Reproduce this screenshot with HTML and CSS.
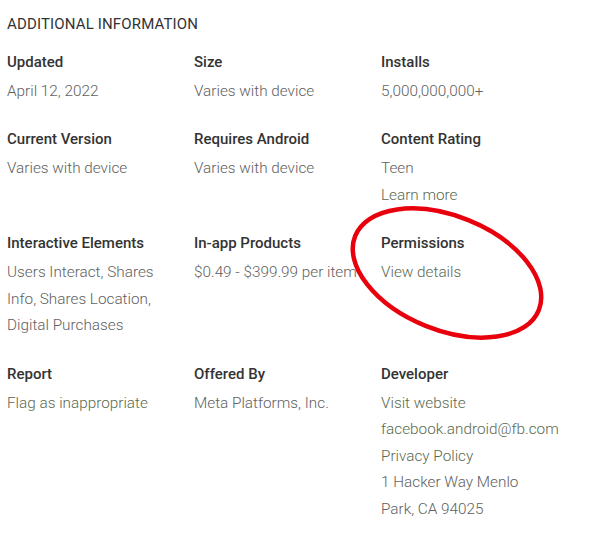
FILE: index.html
```html
<!DOCTYPE html>
<html>
<head>
<meta charset="utf-8">
<link rel="stylesheet" href="styles.css">
</head>
<body>
<div class="page">
  <h2 class="title">ADDITIONAL INFORMATION</h2>
  <div class="grid">
    <div class="item">
      <div class="label">Updated</div>
      <div class="values"><div>April 12, 2022</div></div>
    </div>
    <div class="item">
      <div class="label">Size</div>
      <div class="values"><div>Varies with device</div></div>
    </div>
    <div class="item">
      <div class="label">Installs</div>
      <div class="values"><div>5,000,000,000+</div></div>
    </div>

    <div class="item">
      <div class="label">Current Version</div>
      <div class="values"><div>Varies with device</div></div>
    </div>
    <div class="item">
      <div class="label">Requires Android</div>
      <div class="values"><div>Varies with device</div></div>
    </div>
    <div class="item">
      <div class="label">Content Rating</div>
      <div class="values"><div>Teen</div><div class="link">Learn more</div></div>
    </div>

    <div class="item">
      <div class="label">Interactive Elements</div>
      <div class="values"><div>Users Interact, Shares Info, Shares Location, Digital Purchases</div></div>
    </div>
    <div class="item">
      <div class="label">In-app Products</div>
      <div class="values"><div class="nowrap">$0.49 - $399.99 per item</div></div>
    </div>
    <div class="item">
      <div class="label">Permissions</div>
      <div class="values"><div class="link">View details</div></div>
    </div>

    <div class="item">
      <div class="label">Report</div>
      <div class="values"><div class="link">Flag as inappropriate</div></div>
    </div>
    <div class="item">
      <div class="label">Offered By</div>
      <div class="values"><div>Meta Platforms, Inc.</div></div>
    </div>
    <div class="item">
      <div class="label">Developer</div>
      <div class="values">
        <div class="link">Visit website</div>
        <div class="link">facebook.android@fb.com</div>
        <div class="link">Privacy Policy</div>
        <div>1 Hacker Way Menlo Park, CA 94025</div>
      </div>
    </div>
  </div>
  <svg class="circle" width="614" height="547" viewBox="0 0 614 547" aria-hidden="true">
    <ellipse cx="447" cy="273" rx="99" ry="57" transform="rotate(22 447 273)" fill="none" stroke="#e8000c" stroke-width="4.5"/>
  </svg>
</div>
</body>
</html>
```

FILE: styles.css
```css
html, body {
  margin: 0;
  padding: 0;
  background: #ffffff;
}

.page {
  position: relative;
  width: 614px;
  height: 547px;
  padding: 12px 0 0 7px;
  box-sizing: border-box;
  font-family: Roboto, "Liberation Sans", sans-serif;
  overflow: hidden;
}

.title {
  margin: 0;
  font-size: 15px;
  font-weight: 400;
  line-height: 24px;
  color: #333333;
  letter-spacing: 0.15px;
}

.grid {
  margin-top: 13.5px;
  display: grid;
  grid-template-columns: 170px 170px 170px;
  column-gap: 17px;
  row-gap: 23px;
}

.label {
  font-size: 15px;
  font-weight: 500;
  line-height: 24px;
  color: #333333;
}

.values {
  margin-top: 4px;
  font-size: 15.3px;
  font-weight: 300;
  line-height: 26.5px;
  color: #616161;
}

.link {
  color: #5b6a4f;
}

.nowrap {
  white-space: nowrap;
}

.circle {
  position: absolute;
  left: 0;
  top: 0;
  pointer-events: none;
}
```
